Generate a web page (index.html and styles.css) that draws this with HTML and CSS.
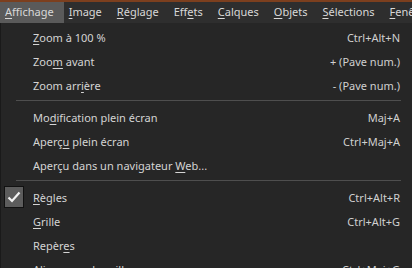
FILE: index.html
```html
<!DOCTYPE html>
<html lang="fr">
<head>
    <meta charset="UTF-8">
    <title>Affichage</title>
    <link rel="stylesheet" href="styles.css">
</head>
<body>
    <div class="topline"></div>
    <div class="menubar">
        <div class="menu-title active"><u>A</u>ffichage</div>
        <div class="menu-title"><u>I</u>mage</div>
        <div class="menu-title"><u>R</u>églage</div>
        <div class="menu-title">Eff<u>e</u>ts</div>
        <div class="menu-title"><u>C</u>alques</div>
        <div class="menu-title"><u>O</u>bjets</div>
        <div class="menu-title"><u>S</u>élections</div>
        <div class="menu-title"><u>F</u>enêtre</div>
    </div>

    <div class="dropdown">
        <div class="item"><span class="check"></span><span class="label"><u>Z</u>oom à 100 %</span><span class="key">Ctrl+Alt+N</span></div>
        <div class="item"><span class="check"></span><span class="label">Zoo<u>m</u> avant</span><span class="key">+ (Pave num.)</span></div>
        <div class="item"><span class="check"></span><span class="label">Zoom arr<u>i</u>ère</span><span class="key">- (Pave num.)</span></div>
        <div class="sep"></div>
        <div class="item"><span class="check"></span><span class="label">Mo<u>d</u>ification plein écran</span><span class="key">Maj+A</span></div>
        <div class="item"><span class="check"></span><span class="label">Aperç<u>u</u> plein écran</span><span class="key">Ctrl+Maj+A</span></div>
        <div class="item"><span class="check"></span><span class="label">Aperçu dans un navigateur <u>W</u>eb...</span><span class="key"></span></div>
        <div class="sep"></div>
        <div class="item"><span class="check on">
            <svg width="14" height="12" viewBox="0 0 14 12"><path d="M1.5 6.5 L5 10 L12.5 1.5" fill="none" stroke="#f2f2f2" stroke-width="2.2"/></svg>
        </span><span class="label"><u>R</u>ègles</span><span class="key">Ctrl+Alt+R</span></div>
        <div class="item"><span class="check"></span><span class="label"><u>G</u>rille</span><span class="key">Ctrl+Alt+G</span></div>
        <div class="item"><span class="check"></span><span class="label">Repèr<u>e</u>s</span><span class="key"></span></div>
        <div class="item"><span class="check"></span><span class="label">Aligner sur la grille</span><span class="key">Ctrl+Maj+G</span></div>
    </div>
</body>
</html>
```

FILE: styles.css
```css
body {
    margin: 0;
    padding: 0;
    width: 412px;
    height: 268px;
    overflow: hidden;
    background-color: #262626;
    font-family: "Noto Sans", "Open Sans", sans-serif;
    font-size: 11px;
    color: #d4d4d4;
}
u {
    text-decoration-thickness: 1px;
    text-underline-offset: 2px;
}
.topline {
    height: 2px;
    background-color: #7c3f1e;
}
.menubar {
    display: flex;
    height: 21px;
    background-color: #2e2e2e;
    white-space: nowrap;
    overflow: hidden;
}
.menu-title {
    padding: 0 7px 0 8px;
    line-height: 20px;
    color: #d8d8d8;
}
.menu-title.active {
    background-color: #5a5a5a;
    padding: 0 10px 0 5px;
    margin-right: -3px;
}
.dropdown {
    background-color: #262626;
    border-left: 1px solid #1a1a1a;
    padding-top: 2px;
}
.item {
    display: flex;
    align-items: center;
    height: 24px;
    padding-right: 12px;
}
.check {
    width: 20px;
    height: 20px;
    margin: 0 9px 0 3px;
    display: flex;
    align-items: center;
    justify-content: center;
    box-sizing: border-box;
}
.check.on {
    background-color: #5c5c5c;
    border: 1px solid #111;
    height: 22px;
}
.label {
    flex: 1;
    white-space: nowrap;
}
.key {
    white-space: nowrap;
    color: #d0d0d0;
}
.sep {
    height: 1px;
    background-color: #4e4e4e;
    margin: 3px 11px 4px 15px;
}
```
